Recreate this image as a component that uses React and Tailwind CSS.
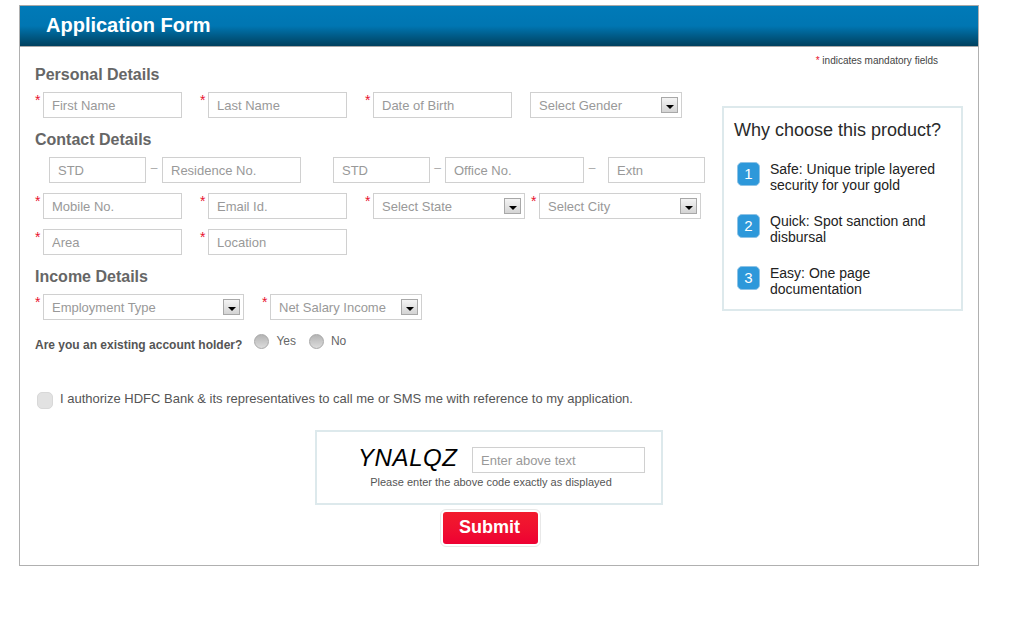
import React from 'react';

const inputClass = 'h-[26px] border border-[#d0d0d0] bg-white px-2 text-[13px] text-[#555] outline-none placeholder:text-[#999]';

const Star = () => (
  <span className="h-[26px] w-2 shrink-0 text-[14px] leading-[17px] text-[#e8112d]">*</span>
);

const Field = ({ placeholder, width, ml, required = true }) => (
  <div className="flex shrink-0" style={{ marginLeft: ml }}>
    {required && <Star />}
    <input placeholder={placeholder} className={inputClass} style={{ width }} />
  </div>
);

const Select = ({ label, width, ml, required = true }) => (
  <div className="flex shrink-0" style={{ marginLeft: ml }}>
    {required && <Star />}
    <div
      className="flex h-[26px] items-center justify-between border border-[#d0d0d0] bg-white pl-2 pr-[3px] text-[13px] text-[#999]"
      style={{ width }}
    >
      <span className="pt-[1px]">{label}</span>
      <span className="flex h-4 w-[17px] items-center justify-center border border-[#a8a8a8] bg-gradient-to-b from-[#f4f4f4] to-[#d4d4d4]">
        <span className="mt-[3px] h-0 w-0 border-x-[4px] border-t-[4px] border-x-transparent border-t-black" />
      </span>
    </div>
  </div>
);

const Dash = ({ className }) => (
  <span className={`h-[26px] text-center text-[12px] leading-[22px] text-[#aaa] ${className}`}>–</span>
);

const Radio = () => (
  <span className="h-[15px] w-[15px] rounded-full border border-[#a8a8a8] bg-gradient-to-b from-[#b4b4b4] to-[#dcdcdc]" />
);

const Heading = ({ children, className }) => (
  <h2 className={`h-5 text-[16px] font-bold leading-5 text-[#666] ${className}`}>{children}</h2>
);

const reasons = [
  { n: 1, lines: ['Safe: Unique triple layered', 'security for your gold'] },
  { n: 2, lines: ['Quick: Spot sanction and', 'disbursal'] },
  { n: 3, lines: ['Easy: One page', 'documentation'] },
];

export default function App() {
  return (
    <div className="min-h-[617px] bg-white pl-[19px] pt-[5px] font-['Liberation_Sans',Arial,sans-serif]">
      <div className="h-[561px] w-[960px] border-x border-b border-[#b0b0b0]">
        <div className="flex h-[42px] items-center border-y border-t-[#a8a8a8] border-b-[#a8a8a8] bg-gradient-to-b from-[#007ab8] via-[#0076b2] to-[#00415f] pb-[2px] pl-[26px] text-[20px] font-bold text-white">
          Application Form
        </div>

        <div className="flex">
          <div className="w-[702px] shrink-0 pl-[15px]">
            <Heading className="mt-[18px]">Personal Details</Heading>
            <div className="mt-[7px] flex">
              <Field placeholder="First Name" width={139} />
              <Field placeholder="Last Name" width={139} ml={18} />
              <Field placeholder="Date of Birth" width={139} ml={18} />
              <Select label="Select Gender" width={152} ml={18} required={false} />
            </div>

            <Heading className="mt-3">Contact Details</Heading>
            <div className="mt-[7px] flex">
              <Field placeholder="STD" width={97} ml={14} required={false} />
              <Dash className="w-4" />
              <Field placeholder="Residence No." width={139} required={false} />
              <Field placeholder="STD" width={97} ml={32} required={false} />
              <Dash className="w-[15px]" />
              <Field placeholder="Office No." width={139} required={false} />
              <Dash className="w-4" />
              <Field placeholder="Extn" width={97} ml={8} required={false} />
            </div>
            <div className="mt-[10px] flex">
              <Field placeholder="Mobile No." width={139} />
              <Field placeholder="Email Id." width={139} ml={18} />
              <Select label="Select State" width={152} ml={18} />
              <Select label="Select City" width={162} ml={6} />
            </div>
            <div className="mt-[10px] flex">
              <Field placeholder="Area" width={139} />
              <Field placeholder="Location" width={139} ml={18} />
            </div>

            <Heading className="mt-3">Income Details</Heading>
            <div className="mt-[7px] flex">
              <Select label="Employment Type" width={201} />
              <Select label="Net Salary Income" width={152} ml={18} />
            </div>

            <div className="mt-3 flex h-5 items-start">
              <span className="mt-[6px] text-[12px] font-bold leading-[15px] text-[#555]">Are you an existing account holder?</span>
              <span className="ml-3 mt-[1px] flex items-center gap-[7px] text-[12px] text-[#666]">
                <Radio />
                <span className="-mt-[1px]">Yes</span>
                <span className="ml-[6px] flex items-center gap-[7px]">
                  <Radio />
                  <span className="-mt-[1px]">No</span>
                </span>
              </span>
            </div>

            <div className="mt-[38px] flex h-5 items-start">
              <span className="ml-[2px] mt-[2px] h-[17px] w-4 rounded-[5px] border border-[#d8d8d8] bg-[#e2e2e2]" />
              <span className="ml-[7px] mt-[1px] text-[13px] leading-[16px] text-[#555]">
                I authorize HDFC Bank &amp; its representatives to call me or SMS me with reference to my application.
              </span>
            </div>

            <div className="ml-[280px] mt-5 h-[75px] w-[348px] border-2 border-[#dde9ec] pt-[15px]">
              <div className="flex h-[26px] items-center">
                <span className="mb-1 ml-[41px] w-[114px] text-[24px] italic leading-none tracking-[0.6px] text-black">YNALQZ</span>
                <input placeholder="Enter above text" className={`${inputClass} w-[173px]`} />
              </div>
              <p className="mt-[2px] pl-1 text-center text-[11px] leading-[14px] text-[#555]">
                Please enter the above code exactly as displayed
              </p>
            </div>

            <div className="ml-[405px] mt-1 w-fit rounded-md border border-[#e8e8e8] p-[2px]">
              <button className="h-8 w-[95px] rounded-[3px] bg-gradient-to-b from-[#f21b2d] to-[#ee0033] pb-[2px] pr-[2px] text-[18px] font-bold text-white">
                Submit
              </button>
            </div>
          </div>

          <div className="flex-1">
            <p className="mt-[7px] h-[13px] pr-10 text-right text-[10px] leading-[13px] text-[#444]">
              <span className="text-[#e8112d]">*</span> indicates mandatory fields
            </p>
            <div className="mt-[39px] h-[205px] w-[241px] border-2 border-[#dde9ec] pl-[10px] pt-[12px]">
              <h3 className="text-[18px] leading-[21px] text-[#2a2a2a]">Why choose this product?</h3>
              <div className="mt-5 flex flex-col gap-5">
                {reasons.map(r => (
                  <div key={r.n} className="flex h-8 items-start">
                    <span className="ml-[3px] mr-[1px] mt-[1px] flex h-6 w-[23px] shrink-0 items-center justify-center rounded-[5px] border border-[#8ec3e6] bg-[#2d98da] text-[15px] text-white">
                      {r.n}
                    </span>
                    <div className="ml-[9px] text-[14px] leading-4 text-[#222]">
                      {r.lines.map(line => <div key={line}>{line}</div>)}
                    </div>
                  </div>
                ))}
              </div>
            </div>
          </div>
        </div>
      </div>
    </div>
  );
}
